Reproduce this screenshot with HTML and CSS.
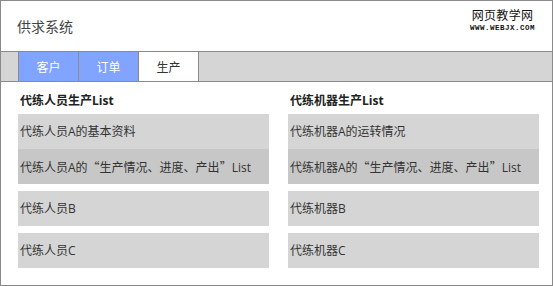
FILE: index.html
```html
<html>
	<head>
		<meta charset="utf-8">
		<title>供求系统</title>
		<link rel="stylesheet" href="styles.css">
	</head>
	<body>
		<div class="frame">
			<div class="header">
				<span class="title">供求系统</span>
				<div class="mark">
					<div class="mark-cn">网页教学网</div>
					<div class="mark-en">WWW.WEBJX.COM</div>
				</div>
			</div>
			<div class="tabs">
				<a class="tab on">客户</a>
				<a class="tab on">订单</a>
				<a class="tab active">生产</a>
			</div>
			<div class="lists">
				<div class="col">
					<h3>代练人员生产List</h3>
					<div class="group">
						<div class="item">代练人员A的基本资料</div>
						<div class="item dark">代练人员A的<span class="cjk">“</span>生产情况、进度、产出<span class="cjk">”</span>List</div>
					</div>
					<div class="item">代练人员B</div>
					<div class="item">代练人员C</div>
				</div>
				<div class="col">
					<h3>代练机器生产List</h3>
					<div class="group">
						<div class="item">代练机器A的运转情况</div>
						<div class="item dark">代练机器A的<span class="cjk">“</span>生产情况、进度、产出<span class="cjk">”</span>List</div>
					</div>
					<div class="item">代练机器B</div>
					<div class="item">代练机器C</div>
				</div>
			</div>
		</div>
	</body>
</html>
```

FILE: styles.css
```css
body { margin: 0; background: #fff;
	font-family: "Open Sans", "Noto Sans CJK SC", sans-serif; color: #333;
}

.frame { width: 553px; height: 286px; box-sizing: border-box;
	border: 1px solid #8a8a8a; }

.header { position: relative; height: 50px; display: flex; align-items: center;
	padding-left: 16px; }
.title { font-size: 14px; color: #444; }

.mark { position: absolute; top: 7px; right: 17px; text-align: center; color: #111; }
.mark-cn { font-size: 12px; line-height: 15px; letter-spacing: 0.3px; }
.mark-en { font-family: "Liberation Mono", monospace; font-weight: bold;
	font-size: 7.5px; line-height: 9px; letter-spacing: 0.5px; margin-top: 1px; }

.tabs { display: flex; height: 29px; background: #d5d5d5;
	border-top: 1px solid #8a8a8a; border-bottom: 1px solid #8a8a8a;
	padding-left: 17px; }
.tab { width: 59px; border-left: 1px solid #8a8a8a; font-size: 12px;
	display: flex; align-items: center; justify-content: center; color: #333; }
.tab.on { background: #80a4ff; color: #fff; }
.tab.active { background: #fff; border-right: 1px solid #8a8a8a; }

.lists { display: flex; gap: 19px; padding: 5px 0 0 17px; }
.col { width: 251px; display: flex; flex-direction: column; gap: 7px; }
.col h3 { margin: 0 0 -7px; font-size: 12px; line-height: 27px; padding-left: 2px; color: #222; }
.group { display: flex; flex-direction: column; }
.item { height: 35px; line-height: 35px; background: #d5d5d5; font-size: 12px;
	padding-left: 2px; white-space: nowrap; }
.item.dark { background: #c7c7c7; }
.cjk { font-family: "Noto Sans CJK SC", sans-serif; }
```
